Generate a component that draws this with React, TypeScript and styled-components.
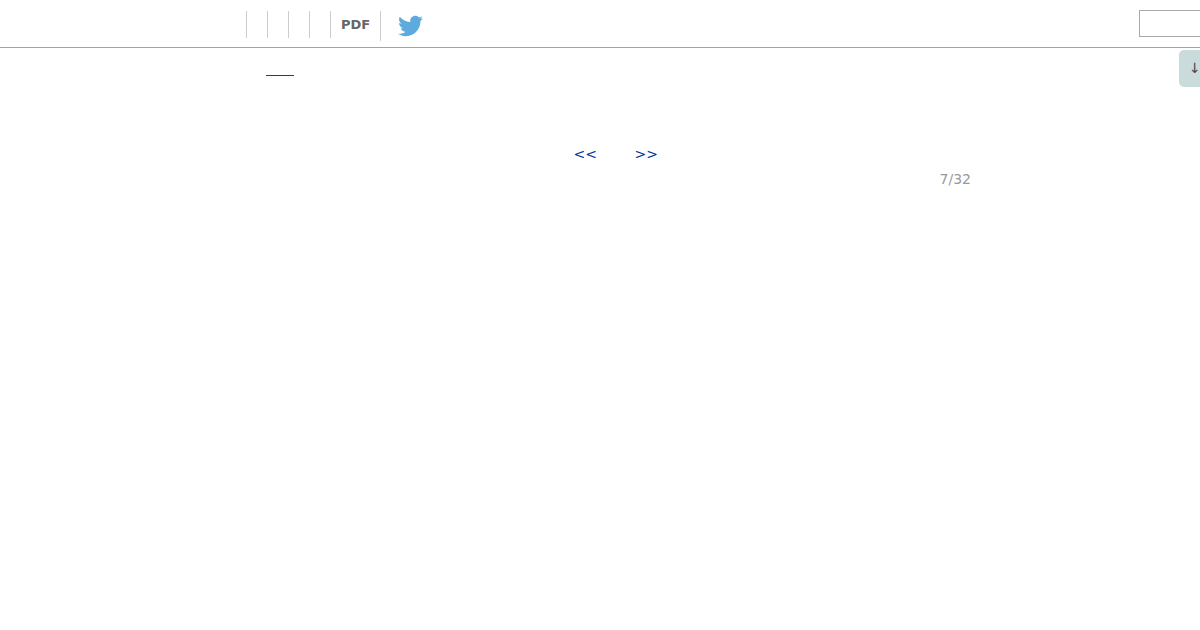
import styled, { createGlobalStyle } from 'styled-components';
import { FaTwitter } from 'react-icons/fa';

const GlobalStyle = createGlobalStyle`
	html, body {
		margin: 0;
		padding: 0;
		background: #fff;
		font-family: "DejaVu Sans", sans-serif;
		overflow: hidden;
	}
`;

function App() {
	return (
		<Page>
			<GlobalStyle />
			<Toolbar>
				<ToolGroup>
					<ToolSlot />
					<ToolSlot />
					<ToolSlot />
					<ToolSlot />
					<PdfSlot>PDF</PdfSlot>
					<TwitterSlot>
						<TwitterIcon color='#5ea9dd' />
					</TwitterSlot>
				</ToolGroup>
				<SearchInput type='text' />
			</Toolbar>
			<SideTab>↓</SideTab>
			<Content>
				<TitleLink href='#' />
				<PagerRow>
					<PagerLink href='#'>&lt;&lt;</PagerLink>
					<PagerLink href='#'>&gt;&gt;</PagerLink>
				</PagerRow>
				<PageCount>7/32</PageCount>
			</Content>
		</Page>
	);
}

const Page = styled.div`
	position: relative;
	width: 1200px;
	height: 630px;
	overflow: hidden;
`;

const Toolbar = styled.header`
	display: flex;
	justify-content: space-between;
	height: 47px;
	border-bottom: 1px solid #a4a4a4;
	padding-left: 246px;
`;

const ToolGroup = styled.div`
	display: flex;
	align-items: flex-start;
`;

const ToolSlot = styled.div`
	width: 20px;
	height: 27px;
	margin-top: 11px;
	border-left: 1px solid #ccc;
`;

const PdfSlot = styled.div`
	box-sizing: border-box;
	width: 50px;
	height: 27px;
	margin-top: 11px;
	padding-left: 10px;
	border-left: 1px solid #ccc;
	color: #666;
	font-size: 13px;
	font-weight: bold;
	line-height: 27px;
`;

const TwitterSlot = styled.div`
	display: flex;
	align-items: center;
	height: 30px;
	margin-top: 11px;
	padding-left: 17px;
	border-left: 1px solid #ccc;
`;

const TwitterIcon = styled(FaTwitter)`
	width: 25px;
	height: 26px;
`;

const SearchInput = styled.input`
	box-sizing: border-box;
	align-self: flex-start;
	width: 80px;
	height: 27px;
	margin: 10px -19px 0 0;
	padding: 0;
	background: #fff;
	border: 1px solid #aaa;
	border-radius: 0;
	outline: none;
`;

const SideTab = styled.div`
	position: absolute;
	top: 50px;
	left: 1179px;
	box-sizing: border-box;
	width: 21px;
	height: 37px;
	padding-left: 10px;
	background: #c9dcdb;
	border-radius: 5px 0 0 5px;
	color: #445;
	font-size: 14px;
	line-height: 36px;
	white-space: nowrap;
`;

const Content = styled.main`
	display: flex;
	flex-direction: column;
	padding-top: 19px;
`;

const TitleLink = styled.a`
	display: block;
	width: 28px;
	height: 8px;
	margin-left: 266px;
	border-bottom: 1px solid #1a3a8a;
`;

const PagerRow = styled.nav`
	display: flex;
	gap: 37.5px;
	margin-top: 68px;
	padding-left: 573.5px;
	line-height: 20px;
`;

const PagerLink = styled.a`
	color: #003399;
	font-size: 14px;
	text-decoration: none;
`;

const PageCount = styled.div`
	width: 971px;
	margin-top: 5px;
	color: #999;
	font-size: 14px;
	line-height: 20px;
	text-align: right;
`;

export default App;
